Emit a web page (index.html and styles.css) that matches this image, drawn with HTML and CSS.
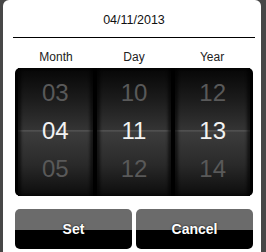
FILE: index.html
```html
<!DOCTYPE html>
<html lang="en">
<head>
  <meta charset="UTF-8">
  <title>Date picker</title>
  <link rel="stylesheet" href="styles.css">
</head>
<body>
  <div class="dialog">
    <div class="title">04/11/2013</div>
    <div class="labels">
      <span>Month</span>
      <span>Day</span>
      <span>Year</span>
    </div>
    <div class="picker">
      <div class="wheel">
        <div class="item">03</div>
        <div class="item selected">04</div>
        <div class="item">05</div>
      </div>
      <div class="wheel">
        <div class="item">10</div>
        <div class="item selected">11</div>
        <div class="item">12</div>
      </div>
      <div class="wheel">
        <div class="item">12</div>
        <div class="item selected">13</div>
        <div class="item">14</div>
      </div>
    </div>
    <div class="buttons">
      <button class="btn">Set</button>
      <button class="btn">Cancel</button>
    </div>
  </div>
</body>
</html>
```

FILE: styles.css
```css
html, body {
  overflow: hidden;
}
body {
  margin: 0;
  background-color: #474747;
  font-family: "Liberation Sans", Arial, sans-serif;
}
.dialog {
  margin: 0 5px 0 3px;
  height: 252px;
  box-sizing: border-box;
  background-color: #fff;
  border-radius: 6px 6px 0 0;
  padding: 0 8px 0 12px;
}
.title {
  margin-left: -2px;
  margin-right: -2px;
  height: 37px;
  line-height: 40px;
  text-align: center;
  font-size: 12.5px;
  color: #111;
  border-bottom: 1px solid #000;
}
.labels {
  display: flex;
  height: 30px;
  line-height: 38px;
  font-size: 12px;
  color: #222;
  padding: 0 2px;
}
.labels span {
  flex: 1;
  text-align: center;
}
.picker {
  display: flex;
  gap: 4px;
  height: 128px;
  background-color: #000;
  border-radius: 5px;
  padding: 0 3px;
}
.wheel {
  flex: 1;
  padding-top: 6px;
  background: linear-gradient(to bottom, #060606 0%, #1c1c1c 25%, #343434 48.5%, #5e5e5e 49%, #3c3c3c 50%, #2a2a2a 75%, #0c0c0c 100%);
  box-shadow: inset 3px 0 3px rgba(0, 0, 0, 0.6), inset -3px 0 3px rgba(0, 0, 0, 0.6);
}
.item {
  height: 38px;
  line-height: 38px;
  text-align: center;
  font-size: 24px;
  color: #595959;
}
.item.selected {
  color: #f2f2f2;
}
.buttons {
  display: flex;
  gap: 4px;
  margin-top: 13px;
}
.btn {
  flex: 1;
  height: 40px;
  border: none;
  border-radius: 5px;
  background: linear-gradient(to bottom, #6b6b6b 0%, #6b6b6b 52%, #000 52%, #000 100%);
  color: #fff;
  font-family: "Liberation Sans", Arial, sans-serif;
  font-weight: bold;
  font-size: 14px;
  text-shadow: 0 0 2px #000;
  padding: 0;
}
```
